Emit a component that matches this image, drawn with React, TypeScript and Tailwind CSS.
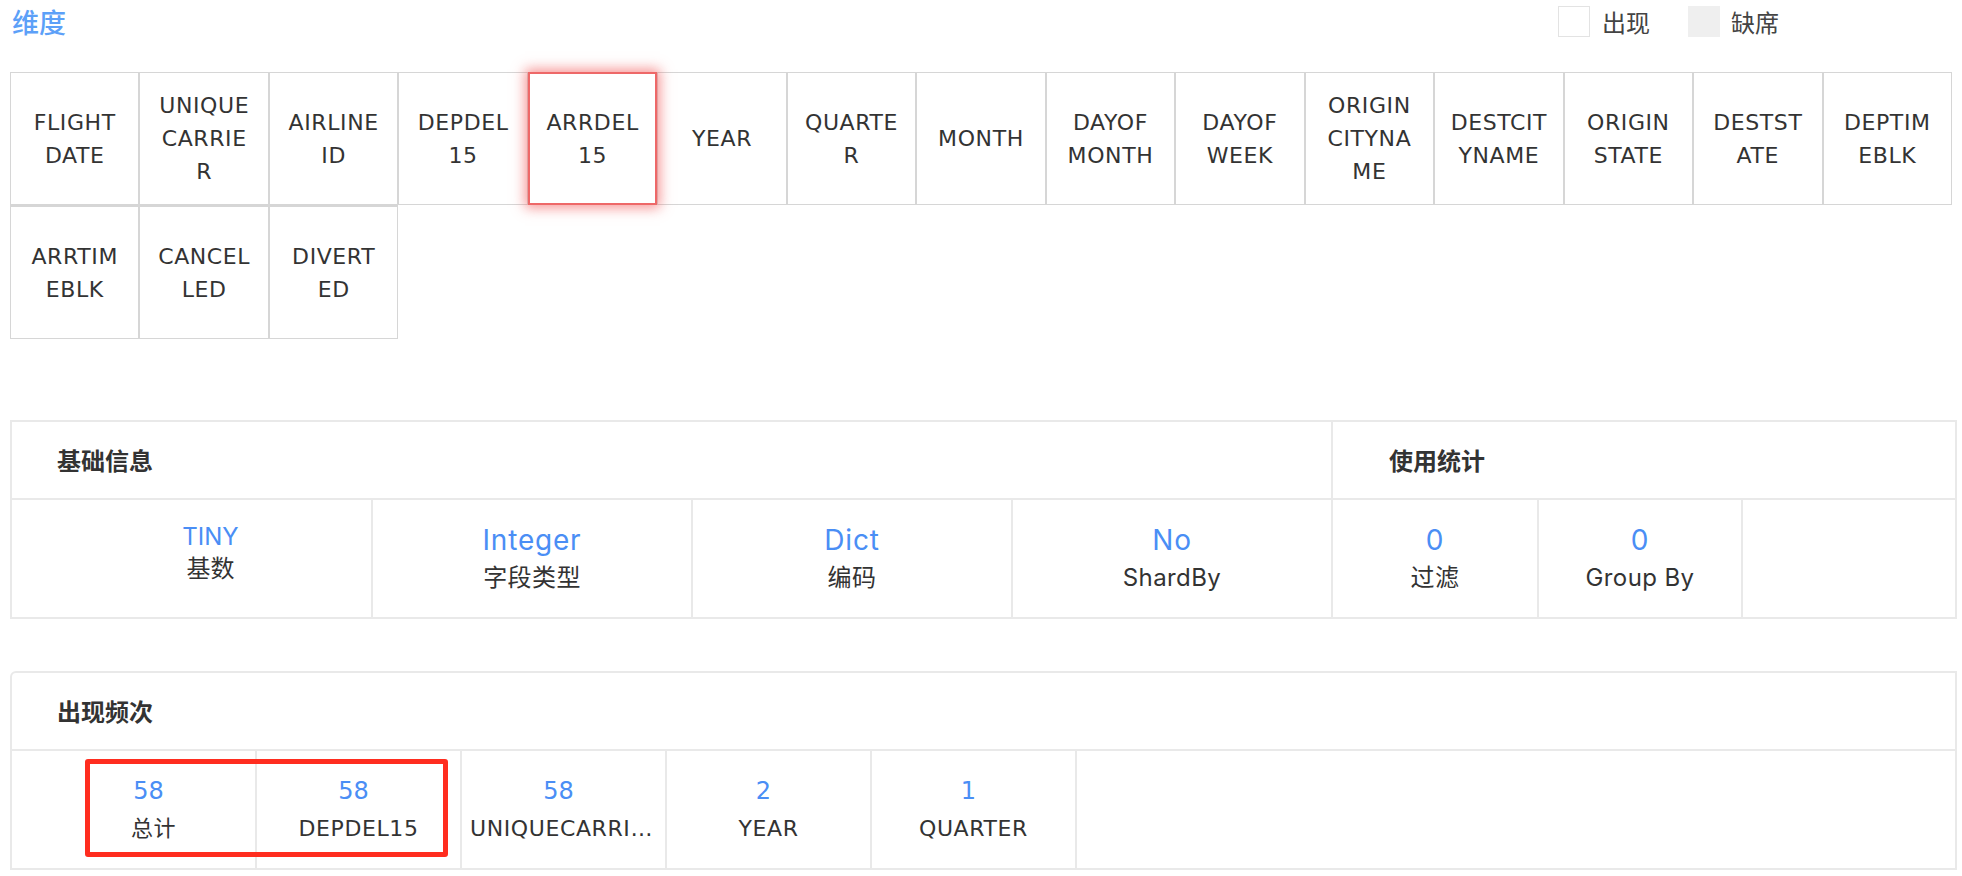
import React from "react";

const dimsRow1: string[][] = [
  ["FLIGHT", "DATE"],
  ["UNIQUE", "CARRIE", "R"],
  ["AIRLINE", "ID"],
  ["DEPDEL", "15"],
  ["ARRDEL", "15"],
  ["YEAR"],
  ["QUARTE", "R"],
  ["MONTH"],
  ["DAYOF", "MONTH"],
  ["DAYOF", "WEEK"],
  ["ORIGIN", "CITYNA", "ME"],
  ["DESTCIT", "YNAME"],
  ["ORIGIN", "STATE"],
  ["DESTST", "ATE"],
  ["DEPTIM", "EBLK"],
];

const dimsRow2: string[][] = [
  ["ARRTIM", "EBLK"],
  ["CANCEL", "LED"],
  ["DIVERT", "ED"],
];

function DimCell({ lines, active, second }: { lines: string[]; active?: boolean; second?: boolean }) {
  const base =
    "flex flex-col items-center justify-center text-[22px] leading-[33px] tracking-[0.6px] text-[#333333]";
  const size = second ? "h-[134px] border border-t-2 border-[#d6d6d6]" : "h-[133px] border border-[#d6d6d6]";
  const act = active
    ? "relative z-10 h-[133px] border-2 border-[#ee6868] bg-white shadow-[0_0_12px_3px_rgba(240,80,80,0.6)]"
    : size;
  return (
    <div className={`${base} ${act}`}>
      {lines.map((l, i) => (
        <span key={i} className="whitespace-nowrap">
          {l}
        </span>
      ))}
    </div>
  );
}

function InfoCell({
  value,
  label,
  small,
  className,
}: {
  value: string;
  label: string;
  small?: boolean;
  className: string;
}) {
  return (
    <div className={`flex flex-col items-center justify-center ${className}`}>
      {small ? (
        <div className="flex flex-col items-center pb-[10px]">
          <span className="text-[24px] leading-[30px] text-[#4a8ef5] [font-family:Inter,'Noto_Sans_CJK_SC',sans-serif]">
            {value}
          </span>
          <span className="text-[24px] leading-[34px] text-[#333333] [font-family:Inter,'Noto_Sans_CJK_SC',sans-serif]">
            {label}
          </span>
        </div>
      ) : (
        <div className="flex flex-col items-center">
          <span className="text-[28px] leading-[38px] tracking-[0.8px] text-[#4a8ef5] [font-family:Inter,'Noto_Sans_CJK_SC',sans-serif]">
            {value}
          </span>
          <span className="text-[24px] leading-[38px] tracking-[0.4px] text-[#333333] [font-family:Inter,'Noto_Sans_CJK_SC',sans-serif]">
            {label}
          </span>
        </div>
      )}
    </div>
  );
}

function FreqCell({ value, label }: { value: string; label: string }) {
  return (
    <div className="flex h-full w-[205px] shrink-0 flex-col items-center justify-center border-r-2 border-[#e9e9e9] px-[8px]">
      <span className="pr-[10px] text-[24px] leading-[37px] text-[#4a8ef5] [font-family:'DejaVu_Sans','Noto_Sans_CJK_SC',sans-serif]">
        {value}
      </span>
      <span className="block w-full truncate text-center text-[22px] leading-[37px] tracking-[0.6px] text-[#333333] [font-family:'DejaVu_Sans','Noto_Sans_CJK_SC',sans-serif]">
        {label}
      </span>
    </div>
  );
}

export default function App() {
  return (
    <div className="h-[876px] w-[1962px] overflow-hidden bg-white px-[10px] [font-family:'DejaVu_Sans','Noto_Sans_CJK_SC',sans-serif]">
      {/* top bar */}
      <div className="flex h-[43px] w-[1942px] items-center justify-between pr-[173px]">
        <div className="pl-[2px] text-[27px] font-medium leading-[43px] text-[#5ca0f8] [font-family:'Noto_Sans_CJK_SC',sans-serif]">
          维度
        </div>
        <div className="flex items-center [font-family:'Noto_Sans_CJK_SC',sans-serif]">
          <span className="h-[31px] w-[32px] border border-[#e3e3e3] bg-white" />
          <span className="ml-[12px] text-[24px] leading-[31px] text-[#444444]">出现</span>
          <span className="ml-[38px] h-[31px] w-[32px] bg-[#efefef]" />
          <span className="ml-[11px] text-[24px] leading-[31px] text-[#444444]">缺席</span>
        </div>
      </div>

      {/* dimension grid */}
      <div className="mt-[29px] grid w-[1942px] grid-cols-[repeat(15,minmax(0,1fr))]">
        {dimsRow1.map((d, i) => (
          <DimCell key={"a" + i} lines={d} active={i === 4} />
        ))}
        {dimsRow2.map((d, i) => (
          <DimCell key={"b" + i} lines={d} second />
        ))}
      </div>

      {/* info box */}
      <div className="mt-[81px] flex w-[1947px] border-2 border-[#e9e9e9]">
        <div className="flex w-[1319px] shrink-0 flex-col">
          <div className="flex h-[78px] items-center border-b-2 border-[#e9e9e9] pl-[45px] text-[24px] font-bold text-[#333333] [font-family:'Noto_Sans_CJK_SC',sans-serif]">
            基础信息
          </div>
          <div className="flex h-[117px] pl-[38px]">
            <InfoCell value="TINY" label="基数" small className="w-[321px]" />
            <InfoCell value="Integer" label="字段类型" className="w-[320px] border-l-2 border-[#e9e9e9]" />
            <InfoCell value="Dict" label="编码" className="w-[320px] border-l-2 border-[#e9e9e9]" />
            <InfoCell value="No" label="ShardBy" className="w-[320px] border-l-2 border-[#e9e9e9]" />
          </div>
        </div>
        <div className="flex flex-1 flex-col border-l-2 border-[#e9e9e9]">
          <div className="flex h-[78px] items-center border-b-2 border-[#e9e9e9] pl-[56px] text-[24px] font-bold text-[#333333] [font-family:'Noto_Sans_CJK_SC',sans-serif]">
            使用统计
          </div>
          <div className="flex h-[117px]">
            <InfoCell value="0" label="过滤" className="w-[204px]" />
            <InfoCell value="0" label="Group By" className="w-[204px] border-l-2 border-[#e9e9e9]" />
            <div className="flex-1 border-l-2 border-[#e9e9e9]" />
          </div>
        </div>
      </div>

      {/* frequency box */}
      <div className="mt-[52px] w-[1947px] rounded-tl-[6px] border-2 border-[#e9e9e9]">
        <div className="flex h-[78px] items-center border-b-2 border-[#e9e9e9] pl-[45px] text-[24px] font-bold text-[#333333] [font-family:'Noto_Sans_CJK_SC',sans-serif]">
          出现频次
        </div>
        <div className="relative flex h-[117px] pl-[40px]">
          <FreqCell value="58" label="总计" />
          <FreqCell value="58" label="DEPDEL15" />
          <FreqCell value="58" label="UNIQUECARRIER" />
          <FreqCell value="2" label="YEAR" />
          <FreqCell value="1" label="QUARTER" />
          <div className="pointer-events-none absolute left-[73px] top-[8px] h-[98px] w-[363px] rounded-[3px] border-[5px] border-[#ff2d1f]" />
        </div>
      </div>
    </div>
  );
}
